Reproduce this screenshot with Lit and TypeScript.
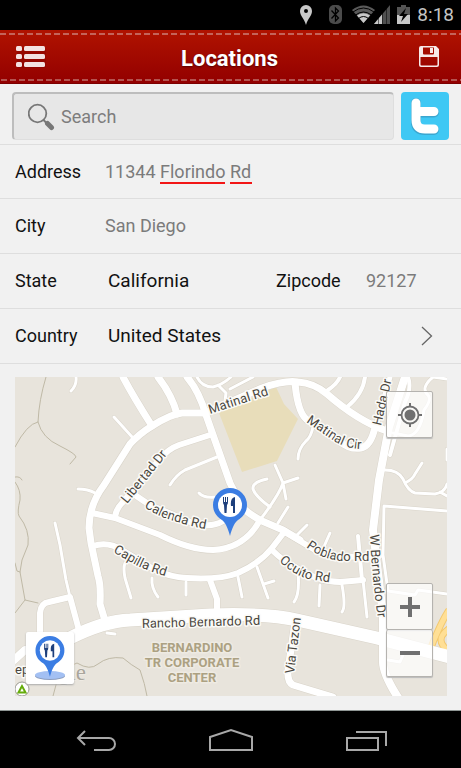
import { LitElement, html, css, svg } from "lit";
import { customElement, property } from "lit/decorators.js";

interface Road {
  d: string;
  w: number;
}

/* Street network, in map units */
const ROADS: Road[] = [
  { w: 3, d: "M76 377Q77 385 71 391M114 417L133 438M78 489Q88 489 95 493M55 523L60 545L66 580L70 597" },
  { w: 3, d: "M217 457L185 470Q176 475 170 485M199 493Q203 498 215 497M107 633L115 634" },
  { w: 3, d: "M125 563Q123 568 125 578L131 598M152 578Q151 588 158 597M186 582V595" },
  { w: 3, d: "M197 377Q202 387 213 387Q222 385 231 377M218 385L226 393L225 401M253 377L230 389" },
  { w: 3, d: "M313 427Q311 437 306 441Q298 449 298 459M275 465L283 483L286 499M298 478L283 483Q279 495 260 520" },
  { w: 3, d: "M267 479Q252 482 253 489Q255 496 270 507M288 507L278 523M307 525L295 537M330 533L322 551" },
  { w: 4, d: "M340 377Q337 384 328 390M365 377Q363 394 347 407M358 536L362 580" },
  { w: 3, d: "M363 580L367 617M385 470Q398 470 403 479Q408 491 415 493L435 494Q445 492 447 484M405 483Q413 479 415 474L422 463M440 492L447 496" },
  { w: 3, d: "M447 511L384 506L383 555L388 591L415 595L418 590L447 594M388 660L400 662L403 655" },
  { w: 3, d: "M447 379L433 377Q420 388 428 395Q432 400 424 410Q420 435 408 436L393 433M447 449V460" },
  { w: 3, d: "M238 577L242 597M257 567L268 598M264 584L274 581M298 573Q300 594 294 602M320 585L319 606M342 585Q346 607 342 612" },
  { w: 4, d: "M408 377Q412 388 405 402L390 455" },
  { w: 6, d: "M210 435L179 445Q168 449 160 459L122 503Q116 509 115 517" },
  { w: 6, d: "M135 495Q142 500 150 505L190 522Q210 529 223 521" },
  { w: 6, d: "M92 513L115 518L160 535Q190 550 213 550Q245 548 260 520" },
  { w: 6, d: "M93 546Q108 541 122 550L155 570Q170 577 187 578Q220 580 238 573Q260 563 272 548L285 531" },
  { w: 6, d: "M40 635V613Q41 603 49 602L70 597L80 634M210 580L217 599V615" },
  { w: 6, d: "M272 550Q283 561 295 567Q318 582 340 582L363 580M283 531L315 550Q327 557 340 557L379 556" },
  { w: 5, d: "M390 377L375 430" },
  { w: 7, d: "M123 377Q133 396 152 426M158 377Q172 395 177 414M187 377Q199 391 206 415L230 483L243 508Q249 514 262 521L283 530L300 540" },
  { w: 7, d: "M295 383Q298 416 309 421L339 441Q350 450 361 448Q371 446 375 427M205 413L262 388Q285 380 298 382Q314 383 327 394Q358 421 387 431" },
  { w: 7, d: "M205 413H182Q171 414 152 426Q139 434 130 444L104 485Q89 505 89 528L91 543L98 576Q101 585 100 604L106 624" },
  { w: 7, d: "M295 622L288 670Q287 682 293 685L333 697" },
  { w: 8, d: "M405 377L389 427L379 480L373 530L383 615L383 660Q382 673 399 699M14 660L25 650L73 636" },
  { w: 13, d: "M70 638Q104 621 130 620L210 615Q265 613 297 620L377 638L450 657" },
];

const TRAILS =
  "M46 377Q39 400 38 422Q27 424 15 447M38 422Q42 438 60 446Q76 454 76 457L70 464M15 477Q20 476 22 480" +
  "M15 482Q21 490 20 500Q17 512 19 516Q30 530 28 545L22 560L20 572L25 600L38 603M25 600L15 613M15 563L17 571L20 572" +
  "M53 696Q58 668 77 663Q90 671 98 664Q108 656 123 658Q131 665 140 670Q145 684 147 696";

/* Baselines the street names run along */
const STREET_NAMES = [
  { id: "matinal", name: "Matinal Rd", d: "M210 414L290 388" },
  { id: "libertad", name: "Libertad Dr", d: "M127 504L184 434" },
  { id: "calenda", name: "Calenda Rd", d: "M144 507Q160 518 178 522Q200 530 230 532" },
  { id: "capilla", name: "Capilla Rd", d: "M113 552L134 564Q150 573 190 583" },
  { id: "cir", name: "Matinal Cir", d: "M306 422L334 441Q352 452 376 448" },
  { id: "hada", name: "Hada Dr", d: "M381 426L394 370" },
  { id: "poblado", name: "Poblado Rd", d: "M306 547Q325 561 345 561H400" },
  { id: "oculto", name: "Oculto Rd", d: "M279 561Q294 575 308 579L360 587" },
  { id: "bernardo", name: "W Bernardo Dr", d: "M370 535Q371 570 380 635" },
  { id: "rancho", name: "Rancho Bernardo Rd", d: "M142 628L290 624" },
  { id: "tazon", name: "Via Tazon", d: "M294 674L303 600" },
];

const pin = svg`
  <path fill="#3b7de3" d="M17 0a17 17 0 0 1 17 17c0 7-4 12-9 15-3 2-6 8-8 16-2-8-5-14-8-16-5-3-9-8-9-15a17 17 0 0 1 17-17z"/>
  <circle cx="17" cy="17" r="12" fill="#fff"/>
  <path fill="#1d3f7c" d="M10 9h1v5h1V9h1v5h1V9h1v5q0 2-1 3l-.5 8h-2L11 17q-1-1-1-3zM22 9v16h-2v-7h-2q-1-8 4-9z"/>`;

@customElement("status-bar")
class StatusBar extends LitElement {
  static styles = css`
    :host {
      display: flex;
      align-items: center;
      justify-content: flex-end;
      height: 30px;
      padding-right: 7px;
      background: #000;
      color: #c4c4c4;
      font-size: 19px;
      line-height: 30px;
    }
    svg {
      display: block;
    }
    time {
      margin-left: 6px;
    }
  `;
  render() {
    return html`
      <svg width="112" height="30" viewBox="299 0 112 30" role="img" aria-label="Location, Bluetooth, Wi-Fi, signal and battery">
        <path fill="#c8c8c8" fill-rule="evenodd" d="M306 5a6 6 0 0 1 6 6c0 5-4 7-6 14-2-7-6-9-6-14a6 6 0 0 1 6-6zm0 4a2 2 0 1 0 0 4 2 2 0 0 0 0-4z"/>
        <rect x="329" y="5" width="13" height="19" rx="5" fill="#4b4b4b"/>
        <path d="M331.500 10.500L338.500 18L335.500 21V8L338.500 11L331.500 18.500" fill="none" stroke="#000" stroke-width="1.300"/>
        <path fill="#5a5a5a" d="M363.500 23L352 10Q363.500 1 375 10z"/>
        <path fill="#c8c8c8" d="M363.500 23L357 15.500Q363.500 11 370 15.500z"/>
        <path d="M353 12Q363.500 4 374 12M355.500 15Q363.500 9 371.500 15M358.500 18.500Q363.500 14.500 368.500 18.500" fill="none" stroke="#000" stroke-width="1"/>
        <path fill="#505050" d="M390 5v19h-16z"/>
        <path fill="#c8c8c8" d="M382 14.500V24h-8z"/>
        <path stroke="#000" stroke-width="0.500" d="M378.500 16v8M382.500 11v13M386.500 7v17"/>
        <path fill="#555" d="M401 5h5v2h4v8h-13V7h4z"/>
        <path fill="#c8c8c8" d="M397 15h13v9h-13z"/>
        <path fill="#000" d="M406 8l-7 8h4l-2 6 7-8h-4z"/>
      </svg>
      <time>8:18</time>
    `;
  }
}

@customElement("title-bar")
class TitleBar extends LitElement {
  @property() heading = "";
  static styles = css`
    :host {
      display: grid;
      grid-template-columns: 62px 1fr 64px;
      align-items: center;
      height: 54px;
      box-sizing: border-box;
      border-bottom: 1px solid #7c0000;
      background:
        repeating-linear-gradient(90deg, #c4645a 0 6px, transparent 6px 9px) 0 3px / 100% 2px no-repeat,
        repeating-linear-gradient(90deg, #b45450 0 6px, transparent 6px 9px) 1px 49px / 100% 2px no-repeat,
        linear-gradient(#b01300, #930000);
    }
    h1 {
      margin: 0;
      padding-top: 4px;
      text-align: center;
      color: #fff;
      font-size: 22px;
      line-height: 28px;
      font-weight: 700;
      text-shadow: 0 1px 2px #500;
    }
    button {
      display: grid;
      place-items: center;
      height: 40px;
      padding: 0;
      border: 0;
      background: none;
    }
    svg {
      display: block;
    }
  `;
  render() {
    return html`
      <button aria-label="Menu">
        <svg width="30" height="24" viewBox="0 0 30 24">
          <g fill="#600000" opacity=".6"><rect x="1" y="3" width="29" height="20" rx="2" opacity=".3"/></g>
          <g fill="#f3e1e1">
            <rect y="1" width="6" height="5" rx="1.500"/><rect x="8" y="1" width="21" height="5" rx="1.500"/>
            <rect y="9" width="6" height="5" rx="1.500"/><rect x="8" y="9" width="21" height="5" rx="1.500"/>
            <rect y="17" width="6" height="5" rx="1.500"/><rect x="8" y="17" width="21" height="5" rx="1.500"/>
          </g>
        </svg>
      </button>
      <h1>${this.heading}</h1>
      <button aria-label="Save">
        <svg width="22" height="22" viewBox="0 0 22 22">
          <path fill="#f7e9e9" fill-rule="evenodd" d="M3 0h15l3 3v16q0 2-2 2H3q-2 0-2-2V2q0-2 2-2zM5 1.500v6q0 1 1 1h9q1 0 1-1v-6zM2.500 11v7.500q0 1 1 1h15q1 0 1-1V11z"/>
          <rect x="12" y="2" width="3" height="5" fill="#f7e9e9"/>
        </svg>
      </button>
    `;
  }
}

@customElement("search-bar")
class SearchBar extends LitElement {
  static styles = css`
    :host {
      display: flex;
      align-items: center;
      gap: 7px;
      padding: 8px 12px 4px;
      border-bottom: 1px solid #dedede;
    }
    label {
      flex: 1;
      display: flex;
      align-items: center;
      gap: 6px;
      min-width: 0;
      height: 48px;
      box-sizing: border-box;
      padding-left: 14px;
      border: 1px solid #c9c9c9;
      border-top: 2px solid #bdbdbd;
      border-left: 2px solid #bdbdbd;
      border-bottom-color: #dedede;
      border-right-color: #dedede;
      border-radius: 4px;
      background: #e7e7e7;
    }
    input {
      flex: 1;
      min-width: 0;
      padding: 0;
      border: 0;
      outline: 0;
      background: none;
      color: #7d7d7d;
      font: inherit;
      font-size: 18px;
      line-height: 24px;
    }
    input::placeholder {
      color: #7d7d7d;
      opacity: 1;
    }
    a,
    svg {
      display: block;
    }
  `;
  render() {
    return html`
      <label>
        <svg width="27" height="28" viewBox="0 0 27 28" aria-hidden="true">
          <circle cx="9.500" cy="10.500" r="8.800" fill="none" stroke="#777" stroke-width="1.800"/>
          <path d="M15.500 17L20 21.500" stroke="#777" stroke-width="2"/>
          <path d="M19.500 20.500L23.500 24.500" stroke="#777" stroke-width="5" stroke-linecap="round"/>
        </svg>
        <input type="search" placeholder="Search" aria-label="Search" />
      </label>
      <a href="#twitter" aria-label="Twitter">
        <svg width="48" height="48" viewBox="0 0 48 48">
          <rect width="48" height="48" rx="4" fill="#3fc8f4"/>
          <path d="M15 11V30Q15 38 24 38H33M15 20.500H33" fill="none" stroke="#3ba6cf" stroke-width="10" stroke-linecap="round"/>
          <path d="M15 11V28Q15 37 24 37H33M15 19.500H33" fill="none" stroke="#fff" stroke-width="9" stroke-linecap="round" stroke-linejoin="round"/>
        </svg>
      </a>
    `;
  }
}

@customElement("address-form")
class AddressForm extends LitElement {
  static styles = css`
    .row {
      display: flex;
      align-items: center;
      height: 54px;
      box-sizing: content-box;
      padding: 0 15px;
      border-bottom: 1px solid #dedede;
    }
    .row.first {
      height: 53px;
    }
    label {
      flex: none;
      width: 90px;
      color: #111;
      font-size: 18px;
      line-height: 24px;
    }
    input,
    select {
      appearance: none;
      flex: 1;
      min-width: 0;
      margin: 0;
      padding: 0;
      border: 0;
      border-radius: 0;
      outline: 0;
      background: none;
      color: #7b7b7b;
      font: inherit;
      font-size: 18px;
      line-height: 24px;
    }
    select {
      padding-left: 3px;
      color: #111;
      font-size: 19px;
    }
    .misspelt {
      background:
        linear-gradient(#f21616, #f21616) 55px 22px / 65px 2px no-repeat,
        linear-gradient(#f21616, #f21616) 125px 22px / 22px 2px no-repeat;
    }
    .zip {
      flex: none;
      width: 80px;
    }
    svg {
      flex: none;
      display: block;
      margin-right: 12px;
    }
  `;
  render() {
    return html`
      <form>
        <div class="row first">
          <label for="address">Address</label>
          <input id="address" class="misspelt" value="11344 Florindo Rd" spellcheck="false" />
        </div>
        <div class="row">
          <label for="city">City</label>
          <input id="city" value="San Diego" />
        </div>
        <div class="row">
          <label for="state">State</label>
          <select id="state"><option>California</option></select>
          <label for="zip">Zipcode</label>
          <input id="zip" class="zip" value="92127" />
        </div>
        <div class="row">
          <label for="country">Country</label>
          <select id="country"><option>United States</option></select>
          <svg width="13" height="20" viewBox="0 0 13 20" aria-hidden="true">
            <path d="M1 1L10.500 10L1 19" fill="none" stroke="#666" stroke-width="1.300"/>
          </svg>
        </div>
      </form>
    `;
  }
}

@customElement("location-map")
class LocationMap extends LitElement {
  static styles = css`
    :host {
      display: grid;
      grid-template-columns: minmax(0, 1fr);
      position: relative;
      min-height: 300px;
      overflow: hidden;
      background: #e8e4dc;
    }
    .canvas {
      position: absolute;
      inset: 0;
      width: 100%;
      height: 100%;
    }
    .casing,
    .road,
    .trail {
      fill: none;
      stroke-linecap: round;
      stroke-linejoin: round;
    }
    .casing {
      stroke: #d9d4ca;
    }
    .road {
      stroke: #fff;
    }
    .trail {
      stroke: #bfb9a6;
      stroke-width: 1;
    }
    .street,
    .district {
      font-size: 13px;
      fill: #4a4740;
      stroke: #fbfaf7;
      stroke-width: 3px;
      stroke-linejoin: round;
      paint-order: stroke;
    }
    .district {
      font-weight: 700;
      fill: #aca182;
      stroke: #efebe3;
      text-anchor: middle;
    }
    .tool {
      display: grid;
      place-items: center;
      width: 47px;
      height: 47px;
      box-sizing: border-box;
      padding: 0;
      border: 1px solid #b5b3af;
      border-radius: 2px;
      background: rgba(255, 255, 255, 0.72);
      box-shadow: 0 1px 1px #bbb;
    }
    .locate {
      position: absolute;
      top: 14px;
      right: 14px;
    }
    .zoom {
      position: absolute;
      right: 14px;
      bottom: 19px;
      display: flex;
      flex-direction: column;
    }
    .zoom .tool + .tool {
      border-top: 0;
    }
    .drop {
      position: absolute;
      left: 11px;
      bottom: 12px;
      width: 48px;
      height: 52px;
      border: 0;
      background: #fff;
      box-shadow: 0 1px 2px #aaa;
    }
    .tool svg {
      display: block;
    }
  `;
  render() {
    return html`
      <svg class="canvas" viewBox="15 377 432 319" preserveAspectRatio="xMidYMid slice" role="img" aria-label="Map of Rancho Bernardo">
        <path class="trail" d=${TRAILS} />
        <path fill="#e8ddba" d="M219 413L276 387L284 404L298 419L277 461L242 472z" />
        ${ROADS.map((r) => svg`<path class="casing" d=${r.d} stroke-width=${r.w + 1} />`)}
        <path d="M449 610Q441 622 430 650M450 628Q432 640 450 652" fill="none" stroke="#f3c86d" stroke-width="7"/>
        <path d="M449 610Q441 622 430 650M450 628Q432 640 450 652" fill="none" stroke="#ffdf95" stroke-width="5"/>
        ${ROADS.map((r) => svg`<path class="road" d=${r.d} stroke-width=${r.w} />`)}
        ${STREET_NAMES.map(
          (s) => svg`
            <path id=${s.id} d=${s.d} fill="none" />
            <text class="street"><textPath href="#${s.id}">${s.name}</textPath></text>`
        )}
        <text class="district" x="192" y="652">BERNARDINO</text>
        <text class="district" x="192" y="667">TR CORPORATE</text>
        <text class="district" x="192" y="682">CENTER</text>
        <text class="street" x="15" y="674">ep</text>
        <text x="86" y="680" text-anchor="end" font-family="Liberation Serif, serif" font-size="23" fill="#aaa69d" stroke="#f4f1eb" stroke-width="1" paint-order="stroke">ogle</text>
        <circle cx="22" cy="689" r="7" fill="#fff" stroke="#9b9b93" />
        <path d="M22 686L18.500 692.500H25.500z" fill="none" stroke="#65ac0b" stroke-width="2" />
        <g transform="translate(213 488)">${pin}</g>
      </svg>
      <button class="tool locate" aria-label="My location">
        <svg width="24" height="24" viewBox="0 0 24 24">
          <circle cx="12" cy="12" r="5.500" fill="#707070"/>
          <circle cx="12" cy="12" r="8.500" fill="none" stroke="#707070" stroke-width="1.800"/>
          <path d="M12 0v4M12 20v4M0 12h4M20 12h4" stroke="#707070" stroke-width="2"/>
        </svg>
      </button>
      <div class="zoom">
        <button class="tool" aria-label="Zoom in">
          <svg width="20" height="20" viewBox="0 0 20 20"><path d="M0 10h20M10 0v20" stroke="#707070" stroke-width="4"/></svg>
        </button>
        <button class="tool" aria-label="Zoom out">
          <svg width="20" height="20" viewBox="0 0 20 20"><path d="M0 10h20" stroke="#707070" stroke-width="4"/></svg>
        </button>
      </div>
      <button class="tool drop" aria-label="Drop pin">
        <svg width="32" height="44" viewBox="0 0 32 44">
          <ellipse cx="16" cy="40" rx="15" ry="4" fill="#8b9dbf"/>
          <ellipse cx="16" cy="39" rx="15" ry="4" fill="#a3c0f3"/>
          <g transform="translate(1.500) scale(.85)">${pin}</g>
        </svg>
      </button>
    `;
  }
}

@customElement("system-nav")
class SystemNav extends LitElement {
  static styles = css`
    :host {
      display: flex;
      justify-content: center;
      gap: 87px;
      align-items: center;
      height: 58px;
      box-sizing: border-box;
      padding-top: 2px;
      border-top: 1px solid #8f9694;
      background: #000;
    }
    button {
      display: block;
      padding: 0;
      border: 0;
      background: none;
    }
    svg {
      display: block;
      fill: none;
      stroke: #a8a8a8;
      stroke-width: 2;
    }
  `;
  render() {
    return html`
      <button aria-label="Back">
        <svg width="48" height="26" viewBox="0 0 48 26">
          <path d="M13 3L6 10L13 17M6 10H37A6 6 0 0 1 37 22H22"/>
        </svg>
      </button>
      <button aria-label="Home">
        <svg width="48" height="26" viewBox="0 0 48 26">
          <path d="M3 22V9L24 2L45 9V22z"/>
        </svg>
      </button>
      <button aria-label="Recent apps">
        <svg width="48" height="26" viewBox="0 0 48 26">
          <path d="M5 10H36V22H5zM14 4H44V18"/>
        </svg>
      </button>
    `;
  }
}

@customElement("app-root")
class AppRoot extends LitElement {
  static styles = css`
    :host {
      display: flex;
      flex-direction: column;
      min-height: 100vh;
      background: #f1f1f1;
      font-family: Roboto, "Liberation Sans", sans-serif;
    }
    main {
      flex: 1;
      display: flex;
      flex-direction: column;
    }
    location-map {
      flex: 1;
      margin: 13px 14px 14px 15px;
    }
  `;
  render() {
    return html`
      <status-bar></status-bar>
      <title-bar heading="Locations"></title-bar>
      <main>
        <search-bar></search-bar>
        <address-form></address-form>
        <location-map></location-map>
      </main>
      <system-nav></system-nav>
    `;
  }
}
